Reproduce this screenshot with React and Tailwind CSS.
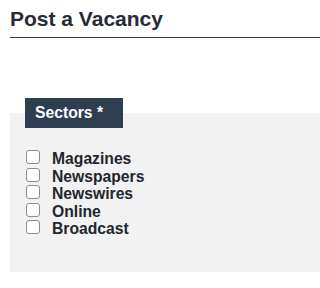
import React from 'react';

const sectors = ['Magazines', 'Newspapers', 'Newswires', 'Online', 'Broadcast'];

export default function App() {
  return (
    <div className="pl-[10px] font-['Liberation_Sans',Arial,sans-serif] text-[#22262e]">
      {/* Heading */}
      <h1 className="pt-[7px] pb-[6px] border-b-[1.5px] border-[#3a3d42] text-[21px] leading-6 font-bold text-[#262b34]">
        Post a Vacancy
      </h1>

      {/* Sectors fieldset */}
      <fieldset className="mt-[60px] h-[174px] pl-[15px] bg-[#f2f2f2]">
        <legend className="w-[98px] h-[30px] pl-[10px] bg-[#2e3d4f] text-white text-[15.7px] leading-[30px] font-bold">
          Sectors *
        </legend>
        <div className="pt-[22px] flex flex-col">
          {sectors.map(s => (
            <label key={s} className="flex items-start gap-[12px] h-[17.5px] text-[15.7px] leading-[17.5px] font-bold">
              <input
                type="checkbox"
                className="appearance-none shrink-0 ml-[1px] w-[14px] h-[14px] bg-white border border-[#8c8c8c] rounded-[3px]"
              />
              <span>{s}</span>
            </label>
          ))}
        </div>
      </fieldset>
    </div>
  );
}
